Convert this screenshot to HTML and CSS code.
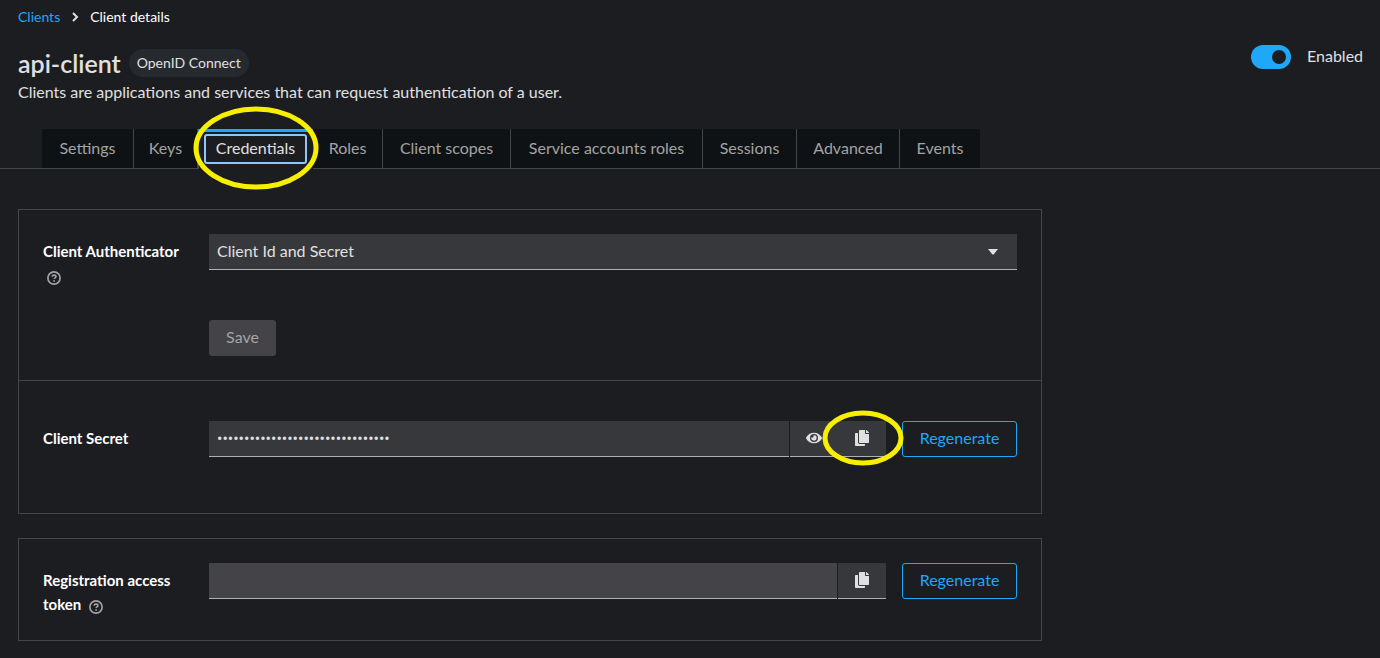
FILE: index.html
```html
<!DOCTYPE html>
<html lang="en">
<head>
<meta charset="utf-8">
<title>Client details</title>
<link rel="stylesheet" href="styles.css">
</head>
<body>
<svg class="sprite" aria-hidden="true">
  <symbol id="copy" viewBox="0 0 448 512"><path d="M320 448v40c0 13.255-10.745 24-24 24H24c-13.255 0-24-10.745-24-24V120c0-13.255 10.745-24 24-24h72v296c0 30.879 25.121 56 56 56h168zm0-344V0H152c-13.255 0-24 10.745-24 24v368c0 13.255 10.745 24 24 24h272c13.255 0 24-10.745 24-24V128H344c-13.2 0-24-10.800-24-24zm120.971-31.029L375.029 7.029A24 24 0 0 0 358.059 0H352v96h96v-6.059a24 24 0 0 0-7.029-16.970z"/></symbol>
  <symbol id="help" viewBox="0 0 16 16"><circle cx="8" cy="8" r="7" fill="none" stroke="currentColor" stroke-width="1.900"/><path d="M5.800 6.600C5.900 5.200 7 4.700 8 4.700S10.200 5.300 10.200 6.500C10.200 7.800 8.100 7.800 8.100 9.200" fill="none" stroke="currentColor" stroke-width="1.800"/><circle cx="8.100" cy="11.300" r="1.100"/></symbol>
</svg>
<header class="page-head">
  <nav class="breadcrumb" aria-label="Breadcrumb">
    <a href="#">Clients</a>
    <svg class="chevron" viewBox="0 0 8 10" aria-hidden="true"><path d="M2 1l4 4-4 4"/></svg>
    <span>Client details</span>
  </nav>
  <div class="title-row">
    <div class="title-block">
      <div class="title-line"><h1>api-client</h1><span class="badge">OpenID Connect</span></div>
      <p class="subtitle">Clients are applications and services that can request authentication of a user.</p>
    </div>
    <label class="switch"><input type="checkbox" role="switch" checked><span>Enabled</span></label>
  </div>
</header>
<nav class="tabs" aria-label="Client sections">
  <button class="tab">Settings</button>
  <button class="tab">Keys</button>
  <div class="current">
    <button class="tab tab-active"><span class="focus-ring">Credentials</span></button>
    <svg class="mark mark-tab" viewBox="0 0 126 84" aria-hidden="true"><ellipse cx="63" cy="42" rx="60" ry="39" stroke-width="5"/></svg>
  </div>
  <button class="tab">Roles</button>
  <button class="tab">Client scopes</button>
  <button class="tab">Service accounts roles</button>
  <button class="tab">Sessions</button>
  <button class="tab">Advanced</button>
  <button class="tab tab-last">Events</button>
</nav>
<main class="content">
  <section class="card">
    <div class="row row-auth">
      <div class="label"><label for="auth">Client Authenticator</label> <button class="help" aria-label="Help"><svg><use href="#help"/></svg></button></div>
      <div class="stack">
        <div class="select-wrap">
          <select id="auth" class="field"><option>Client Id and Secret</option></select>
          <svg class="caret" viewBox="0 0 10 6" aria-hidden="true"><path d="M0 0h10L6 5Q5 6 4 5z"/></svg>
        </div>
        <button class="save" disabled>Save</button>
      </div>
    </div>
    <div class="row row-secret">
      <div class="label"><label for="secret">Client Secret</label></div>
      <div class="controls">
        <div class="group">
          <input id="secret" class="field field-secret" type="password" value="0123456789abcdef0123456789abcdef">
          <button class="icon-btn" aria-label="Show"><svg class="eye" viewBox="0 0 576 512"><path d="M572.520 241.400C518.290 135.590 410.930 64 288 64S57.680 135.640 3.480 241.410a32.350 32.350 0 0 0 0 29.190C57.710 376.410 165.070 448 288 448s230.320-71.640 284.520-177.410a32.350 32.350 0 0 0 0-29.190zM288 400a144 144 0 1 1 144-144 143.930 143.930 0 0 1-144 144zm0-240a95.310 95.310 0 0 0-25.310 3.790 47.850 47.850 0 0 1-66.900 66.900A95.780 95.780 0 1 0 288 160z"/></svg></button>
          <div class="copy-wrap">
            <button class="icon-btn" aria-label="Copy"><svg class="copy"><use href="#copy"/></svg></button>
            <svg class="mark mark-copy" viewBox="0 0 82 56" aria-hidden="true"><ellipse cx="41" cy="28" rx="38" ry="25" stroke-width="5"/></svg>
          </div>
        </div>
        <button class="outline">Regenerate</button>
      </div>
    </div>
  </section>
  <section class="card">
    <div class="row row-token">
      <div class="label"><label for="token">Registration access token</label> <button class="help" aria-label="Help"><svg><use href="#help"/></svg></button></div>
      <div class="controls">
        <div class="group">
          <input id="token" class="field field-readonly" type="text" readonly>
          <button class="icon-btn" aria-label="Copy"><svg class="copy"><use href="#copy"/></svg></button>
        </div>
        <button class="outline">Regenerate</button>
      </div>
    </div>
  </section>
</main>
</body>
</html>
```
FILE: styles.css
```css
* { box-sizing: border-box; }
body {
  margin: 0;
  background: #1c1d21;
  color: #e0e0e0;
  font-family: Lato, "Liberation Sans", sans-serif;
  font-size: 16px;
  line-height: 24px;
}
button, input, select { font: inherit; color: inherit; margin: 0; border: 0; border-radius: 0; }
.sprite { position: absolute; width: 0; height: 0; }
svg { fill: currentColor; }

.page-head { padding: 6px 14px 24px 18px; }
.breadcrumb { display: flex; align-items: center; gap: 11px; font-size: 14px; line-height: 22px; color: #fff; }
.breadcrumb a { color: #1fa7f8; text-decoration: none; }
.chevron { width: 8px; height: 10px; fill: none; stroke: #e0e0e0; stroke-width: 2; }
.title-row { display: flex; justify-content: space-between; align-items: flex-start; padding-top: 17px; }
.title-line { display: flex; align-items: center; gap: 8px; height: 36px; }
h1 { margin: 0; font-size: 25px; line-height: 32px; font-weight: 600; }
.badge { padding: 3px 8px; border-radius: 16px; background: #26292d; font-size: 14px; line-height: 22px; }
.subtitle { margin: 0; padding-bottom: 2px; line-height: 22px; }
.switch { display: flex; align-items: center; gap: 16px; }
.switch span { min-width: 59px; padding-bottom: 2px; line-height: 22px; }
.switch input {
  appearance: none;
  width: 40px;
  height: 24px;
  padding: 5px;
  border-radius: 12px;
  background: #1fa7f8;
  display: flex;
  justify-content: flex-end;
}
.switch input::before { content: ""; width: 14px; height: 14px; border-radius: 50%; background: #1c1d21; }

.tabs {
  display: grid;
  grid-template-columns: 92px 64px 115px 70px 128px 192px 94px 103px 80px;
  height: 40px;
  padding-left: 42px;
  border-bottom: 1px solid #444548;
}
.tab { padding: 0 0 2px; background: #0f1214; color: #a3a3a5; border-right: 1px solid #444548; text-align: center; white-space: nowrap; }
.tab-last { border-right: 0; }
.current { position: relative; display: grid; margin-bottom: -1px; }
.tab-active { padding: 2px 6px 5px 5px; color: #e0e0e0; background: #1c1d21; border-top: 3px solid #1fa7f8; border-right: 0; border-left: 1px solid #444548; }
.focus-ring { display: block; padding: 1px 0 3px; line-height: 22px; border: 2px solid #92c5f9; border-radius: 3px; }
.mark { position: absolute; z-index: 1; fill: none; stroke: #f7ee00; pointer-events: none; }
.mark-tab { width: 126px; height: 84px; left: -5px; top: -23px; }

.content { display: grid; gap: 24px; padding: 40px 18px 16px; max-width: 1060px; }
.card { border: 1px solid #444548; }
.row { display: grid; grid-template-columns: 140px 1fr; gap: 26px; padding: 24px; }
.row + .row { border-top: 1px solid #444548; }
.row-secret { padding: 40px 24px 56px; }
.label { padding-top: 5px; font-size: 15px; font-weight: 700; color: #fff; }
.help { padding: 2px 4px 0; background: none; color: #a3a3a5; line-height: 0; vertical-align: middle; }
.help svg { width: 14px; height: 14px; }
.stack { display: grid; gap: 50px; justify-items: start; }
.select-wrap { position: relative; width: 100%; }
.field {
  appearance: none;
  display: block;
  width: 100%;
  min-width: 0;
  height: 36px;
  padding: 0 8px 2px;
  background: #37383b;
  border-bottom: 1px solid #b0b0b2;
  outline: 0;
}
.field-secret { padding-bottom: 0; font-family: Roboto, sans-serif; }
.field-readonly { background: #444347; }
.caret { position: absolute; right: 19px; top: 15px; width: 10px; height: 6px; pointer-events: none; }
.save { width: 67px; height: 36px; padding: 0 0 2px; border-radius: 3px; background: #444347; color: #a3a3a5; }
.controls { display: flex; gap: 16px; }
.group { display: flex; flex: 1; min-width: 0; gap: 1px; }
.group .field { flex: 1; }
.icon-btn { display: grid; place-items: center; width: 48px; height: 36px; padding: 0 0 2px; background: #37383b; border-bottom: 1px solid #b0b0b2; }
.icon-btn .copy { width: 14px; height: 16px; }
.eye { width: 16px; height: 16px; }
.copy-wrap { position: relative; margin-left: -1px; }
.mark-copy { width: 82px; height: 56px; left: -16px; top: -11px; }
.outline { width: 115px; height: 36px; padding: 0 0 2px; border: 1px solid #1fa7f8; border-radius: 3px; background: none; color: #1fa7f8; }
```
